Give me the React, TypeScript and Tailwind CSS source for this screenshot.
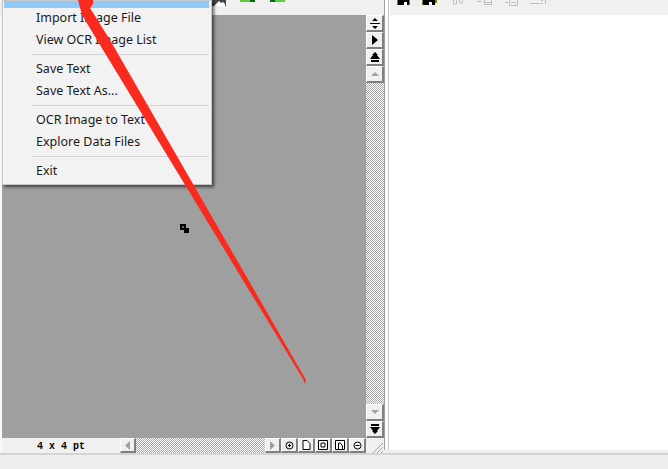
import React from "react";

const Btn = ({ children, cls = "" }: { children?: React.ReactNode; cls?: string }) => (
  <div className={"flex items-center justify-center bg-[#f0f0f0] border-t border-l border-t-white border-l-white border-r-2 border-b-2 border-r-[#808080] border-b-[#808080] " + cls}>
    {children}
  </div>
);

const checker = "bg-[repeating-conic-gradient(#a8a8a8_0_25%,#ffffff_0_50%)] bg-[length:2px_2px]";

const Sep = () => <div className="h-px bg-[#d4d4d4] ml-[28px] mr-[2px] my-[3px]" />;

export default function App() {
  return (
    <div className="relative w-[668px] h-[469px] overflow-hidden bg-[#eeeeee] flex flex-col font-['Liberation_Sans',sans-serif]">
      <div className="flex-1 flex min-h-0">
        {/* left pane */}
        <div className="w-[384px] shrink-0 flex flex-col">
          <div className="h-[15px] shrink-0 bg-[#f0f0f0] overflow-hidden">
            <svg width="384" height="15" className="block">
              <rect x="212" y="0" width="14" height="6" fill="#444" />
              <path d="M214 6l5-5 2 2 2-1 2 2v2z" fill="#fff" />
              <rect x="240" y="0" width="10" height="2" fill="#5dcb3a" />
              <rect x="250" y="0" width="5" height="2" fill="#0a6a0a" />
              <rect x="270" y="0" width="5" height="2" fill="#0a6a0a" />
              <rect x="275" y="0" width="10" height="2" fill="#5dcb3a" />
            </svg>
          </div>
          <div className="flex-1 flex min-h-0 bg-[#f8f8f8] pl-[2px]">
            <div className="w-[364px] flex flex-col shrink-0">
              <div className="flex-1 bg-[#9f9f9f]" />
              <div className="h-[15px] flex items-stretch shrink-0 bg-[#f0f0f0]">
                <div className="w-[118px] font-['Liberation_Mono',monospace] font-bold text-[10px] leading-[18px] pl-[35px] text-black whitespace-pre">4 x 4 pt</div>
                <Btn cls="w-[16px]">
                  <svg width="6" height="9"><path d="M5 0v9L0 4.500z" fill="#a0a0a0" /></svg>
                </Btn>
                <div className={"flex-1 " + checker} />
                <Btn cls="w-[16px]">
                  <svg width="6" height="9"><path d="M0 0v9l5-4.500z" fill="#a0a0a0" /></svg>
                </Btn>
                <Btn cls="w-[17px]">
                  <svg width="9" height="9"><circle cx="4.500" cy="4.500" r="3.500" fill="none" stroke="#000" /><path d="M3 4.500h3M4.500 3v3" stroke="#000" /></svg>
                </Btn>
                <Btn cls="w-[17px]">
                  <svg width="9" height="10"><path d="M1 .5h4l3 3v6h-7z" fill="#fff" stroke="#000" /></svg>
                </Btn>
                <Btn cls="w-[17px]">
                  <svg width="10" height="10"><path d="M.5.5h9v9h-9z" fill="#fff" stroke="#000" /><path d="M3 3h4v4h-4z" fill="none" stroke="#000" /></svg>
                </Btn>
                <Btn cls="w-[17px]">
                  <svg width="10" height="10"><path d="M.5.5h9v9h-9z" fill="#fff" stroke="#000" /><path d="M3.500 9v-6h2l2 3v3" fill="none" stroke="#000" /></svg>
                </Btn>
                <Btn cls="w-[17px]">
                  <svg width="9" height="9"><circle cx="4.500" cy="4.500" r="3.500" fill="none" stroke="#000" /><path d="M2.500 4.500h4" stroke="#000" /></svg>
                </Btn>
              </div>
            </div>
            <div className="w-[18px] flex flex-col shrink-0 bg-[#f0f0f0]">
              <Btn cls="h-[17px]">
                <svg width="10" height="11"><path d="M2 3h6L5 0zM0 5h10v1H0zM2 8h6l-3 3z" fill="#000" /></svg>
              </Btn>
              <Btn cls="h-[17px]">
                <svg width="6" height="10"><path d="M0 0l6 5-6 5z" fill="#000" /></svg>
              </Btn>
              <Btn cls="h-[17px]">
                <svg width="10" height="10"><path d="M5 0l3 3H7l3 4H0l3-4H2zM1 8h8v2H1z" fill="#000" /></svg>
              </Btn>
              <Btn cls="h-[17px]">
                <svg width="8" height="5"><path d="M4 0l4 4H0z" fill="#a0a0a0" /></svg>
              </Btn>
              <div className={"flex-1 " + checker} />
              <Btn cls="h-[17px]">
                <svg width="8" height="5"><path d="M0 0h8L4 4z" fill="#a0a0a0" /></svg>
              </Btn>
              <Btn cls="h-[17px]">
                <svg width="10" height="10"><path d="M1 0h8v2H1zM0 3h10L7 7h1l-3 3-3-3h1z" fill="#000" /></svg>
              </Btn>
              <div className="h-[15px] overflow-hidden">
                <svg width="18" height="15" className="block"><path d="M7 15L17 5M11 15l6-6M15 15l2-2" stroke="#a0a0a0" /></svg>
              </div>
            </div>
          </div>
        </div>
        {/* sash */}
        <div className="w-[6px] shrink-0 bg-white border-l border-l-[#a0a0a0] flex justify-end pr-[1px] mb-[3px]">
          <div className="w-px bg-[#c8c8c8]" />
        </div>
        {/* right pane */}
        <div className="flex-1 flex flex-col pb-[3px]">
          <div className="h-[15px] shrink-0 bg-[#f0f0f0] overflow-hidden">
            <svg width="278" height="15" className="block">
              <rect x="7" y="0" width="13" height="5" fill="#000" />
              <rect x="7" y="0" width="1" height="5" fill="#808000" />
              <rect x="19" y="0" width="1" height="5" fill="#808000" />
              <rect x="14" y="2" width="3" height="3" fill="#fff" />
              <rect x="32" y="0" width="13" height="5" fill="#000" />
              <rect x="32" y="0" width="1" height="5" fill="#808000" />
              <rect x="45" y="0" width="2" height="3" fill="#808000" />
              <rect x="39" y="2" width="3" height="3" fill="#fff" />
              <path d="M63.500 0v4h3v-4M69.500 0v3h3v-3" fill="none" stroke="#c0c0c0" />
              <path d="M87 1.500h5M94.500 0v4.500h7v-4.500M94.500 2.500h7M115 2.500h3M119.500 0v5.500h8v-5.500M121 2.500h5" fill="none" stroke="#bdbdbd" />
              <path d="M140 3.500h10M151 3.500h2M155.500 0v4M151 .5h2" fill="none" stroke="#bdbdbd" />
            </svg>
          </div>
          <div className="flex-1 bg-white" />
        </div>
      </div>
      <div className="h-[16px] shrink-0 bg-[#eeeeee] border-t-2 border-t-[#d4d4d4]" />

      <div className="absolute left-[2px] top-0 w-[210px] h-[185px] bg-[#f2f2f2] border border-[#c8c8c8] shadow-[2px_2px_3px_rgba(0,0,0,0.6)] pl-[1px] text-[12.5px] text-[#1a1a1a] font-['Noto_Sans',sans-serif] leading-[22px]">
        <div className="h-[7px] bg-[#90c8f6] mr-[2px]" />
        <div className="pl-[32px] mt-[-1px]">
          <div className="h-[22px]">Import Image File</div>
          <div className="h-[22px]">View OCR Image List</div>
        </div>
        <Sep />
        <div className="pl-[32px]">
          <div className="h-[22px]">Save Text</div>
          <div className="h-[22px]">Save Text As...</div>
        </div>
        <Sep />
        <div className="pl-[32px]">
          <div className="h-[22px]">OCR Image to Text</div>
          <div className="h-[22px]">Explore Data Files</div>
        </div>
        <Sep />
        <div className="pl-[32px]">
          <div className="h-[22px]">Exit</div>
        </div>
      </div>

      <svg className="absolute left-0 top-0 pointer-events-none" width="668" height="469">
        <path d="M78 0H93V4L90 8L110 40L306 380L305 384L303 379L97 40L82 15Z" fill="#fb2a1e" />
        <rect x="180" y="224" width="6" height="6" fill="#000" />
        <rect x="182" y="226" width="2" height="2" fill="#3f7f3f" />
        <rect x="184" y="228" width="5" height="5" fill="#000" />
      </svg>
    </div>
  );
}
